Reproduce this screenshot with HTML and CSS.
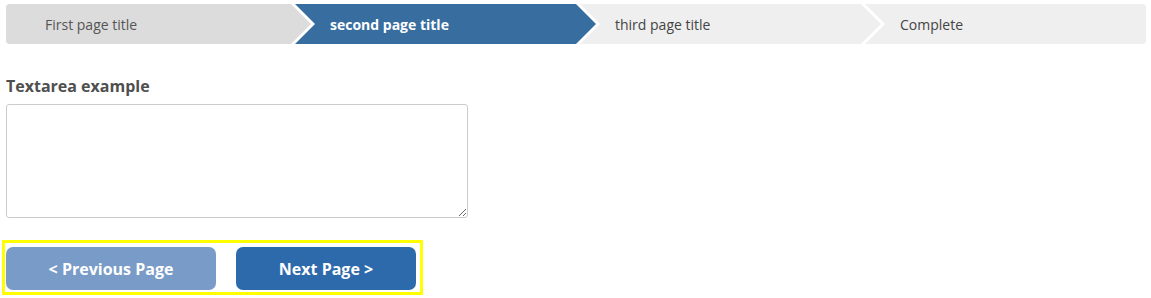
FILE: index.html
```html
<!DOCTYPE html>
<html lang="en">
<head>
  <meta charset="UTF-8" />
  <title>Survey page 2</title>
  <link rel="stylesheet" href="styles.css">
</head>
<body>
  <div class="page">
    <!-- Progress steps -->
    <ul class="steps">
      <li class="step done">First page title</li>
      <li class="step current">second page title</li>
      <li class="step">third page title</li>
      <li class="step last">Complete</li>
    </ul>

    <!-- Question -->
    <div class="question">
      <label for="answer">Textarea example</label>
      <textarea id="answer"></textarea>
    </div>

    <!-- Navigation -->
    <div class="nav">
      <button class="btn btn-prev">&lt; Previous Page</button>
      <button class="btn btn-next">Next Page &gt;</button>
    </div>
  </div>
</body>
</html>
```

FILE: styles.css
```css
* {
  margin: 0;
  padding: 0;
  box-sizing: border-box;
  font-family: 'Open Sans', sans-serif;
}

body {
  background: #fff;
  color: #555;
}

.page {
  padding: 4px 5px 0 6px;
}

/* Progress steps */
.steps {
  display: flex;
  list-style: none;
  height: 40px;
  border-radius: 4px;
  overflow: hidden;
  background: #efefef;
}

.step {
  flex: 1;
  position: relative;
  display: flex;
  align-items: center;
  padding-left: 39px;
  font-size: 14px;
  color: #444;
  background: #efefef;
}

.step::before,
.step::after {
  content: "";
  position: absolute;
  left: 100%;
  width: 0;
  height: 0;
}

/* white border of the chevron */
.step::before {
  top: -4px;
  border-top: 24px solid transparent;
  border-bottom: 24px solid transparent;
  border-left: 24px solid #fff;
  z-index: 2;
}

.step::after {
  top: 0;
  border-top: 20px solid transparent;
  border-bottom: 20px solid transparent;
  border-left: 20px solid #efefef;
  z-index: 3;
}

.step.done {
  background: #dcdcdc;
  color: #555;
}

.step.done::after {
  border-left-color: #dcdcdc;
}

.step.current {
  background: #386da0;
  color: #fff;
  font-weight: bold;
}

.step.current::after {
  border-left-color: #386da0;
}

.step.last::before,
.step.last::after {
  display: none;
}

/* Question */
.question {
  margin-top: 31px;
}

.question label {
  display: block;
  font-size: 16px;
  font-weight: bold;
  color: #4f4f4f;
  margin-bottom: 7px;
}

.question textarea {
  display: block;
  width: 462px;
  height: 114px;
  border: 1px solid #ccc;
  border-radius: 3px;
  resize: both;
}

/* Navigation */
.nav {
  display: flex;
  gap: 20px;
  width: 421px;
  margin: 22px 0 0 -4px;
  padding: 4px 4px 2px 1px;
  border: 3px solid #ffff00;
}

.btn {
  height: 43px;
  border: none;
  border-radius: 7px;
  color: #fff;
  font-size: 16px;
  font-weight: bold;
  cursor: pointer;
}

.btn-prev {
  width: 210px;
  background: #789bc7;
}

.btn-next {
  width: 180px;
  background: #2d6aab;
}
```
